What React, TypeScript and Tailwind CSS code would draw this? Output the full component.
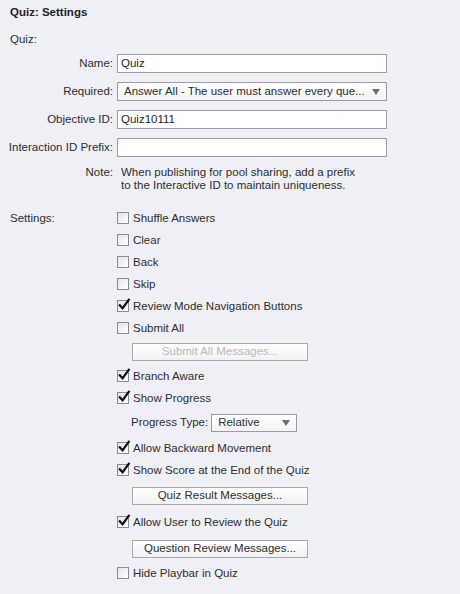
import React from "react";

const font = { fontFamily: '"Liberation Sans", Arial, sans-serif' };

function Check({ checked, label }: { checked?: boolean; label: string }) {
  return (
    <div className="flex h-[22px] items-center">
      <div className="relative h-[12px] w-[12px] border border-[#8c8c90] bg-gradient-to-br from-[#e4e4e8] to-[#ffffff]">
        {checked && (
          <svg viewBox="0 0 12 12" className="absolute left-[0px] top-[-2px] h-[12px] w-[12px] overflow-visible">
            <path d="M1.8 6.2 L4.6 9.2 L10.8 0.8" fill="none" stroke="#111" strokeWidth="2.2" strokeLinecap="square" strokeLinejoin="miter" />
          </svg>
        )}
      </div>
      <span className="ml-[4px] whitespace-nowrap text-[11.5px] leading-[14px] text-[#2e2e2e]">{label}</span>
    </div>
  );
}

function Btn({ label, disabled }: { label: string; disabled?: boolean }) {
  return (
    <div
      className={`ml-[15px] flex h-[18px] w-[176px] items-center justify-center border border-[#a8a8ae] bg-gradient-to-b from-[#ffffff] to-[#f1f1f3] text-[11.5px] ${
        disabled ? "text-[#b8b8bc]" : "text-[#2e2e2e]"
      }`}
    >
      {label}
    </div>
  );
}

function Row({ label, children }: { label: string; children: React.ReactNode }) {
  return (
    <div className="flex h-[19px] items-center">
      <div className="w-[114px] whitespace-nowrap pr-[1px] text-right text-[11.5px] text-[#2e2e2e]">{label}</div>
      <div className="ml-[3px]">{children}</div>
    </div>
  );
}

function Input({ value }: { value?: string }) {
  return (
    <div className="flex h-[19px] w-[270px] items-center border border-[#9c9ca4] bg-white pl-[3px] text-[11.5px] text-[#1e1e1e]">
      {value}
    </div>
  );
}

export default function App() {
  return (
    <div className="h-[594px] w-[460px] overflow-hidden bg-[#eff0f6] text-[#2e2e2e]" style={font}>
      <div className="pl-[10px] pt-[4px] text-[11.5px] font-bold leading-[16px] text-[#1e1e1e]">Quiz: Settings</div>
      <div className="mt-[11px] pl-[10px] text-[11.5px] leading-[16px]">Quiz:</div>
      <div className="mt-[7px] flex flex-col gap-[9px]">
        <Row label="Name:">
          <Input value="Quiz" />
        </Row>
        <Row label="Required:">
          <div className="flex h-[19px] w-[270px] items-center justify-between border border-[#9c9ca4] bg-gradient-to-b from-[#ffffff] to-[#f3f3f5] pl-[6px] pr-[6px] text-[11.5px] text-[#2e2e2e]">
            <span className="whitespace-nowrap">Answer All - The user must answer every que...</span>
            <svg viewBox="0 0 8 6" className="h-[6px] w-[8px] shrink-0">
              <path d="M0 0 H8 L4 6 Z" fill="#6e6e74" />
            </svg>
          </div>
        </Row>
        <Row label="Objective ID:">
          <Input value="Quiz10111" />
        </Row>
        <Row label="Interaction ID Prefix:">
          <Input />
        </Row>
      </div>
      <div className="mt-[9px] flex text-[11.5px] leading-[13px]">
        <div className="w-[114px] pr-[1px] text-right">Note:</div>
        <div className="ml-[7px]">
          When publishing for pool sharing, add a prefix
          <br />
          to the Interactive ID to maintain uniqueness.
        </div>
      </div>
      <div className="mt-[15px] flex">
        <div className="h-[22px] w-[117px] pl-[10px] text-[11.5px] leading-[22px]">Settings:</div>
        <div className="flex flex-col">
          <Check label="Shuffle Answers" />
          <Check label="Clear" />
          <Check label="Back" />
          <Check label="Skip" />
          <Check checked label="Review Mode Navigation Buttons" />
          <Check label="Submit All" />
          <div className="mt-[4px]">
            <Btn label="Submit All Messages..." disabled />
          </div>
          <div className="mt-[4px]">
            <Check checked label="Branch Aware" />
          </div>
          <Check checked label="Show Progress" />
          <div className="mt-[5px] flex h-[18px] items-center">
            <span className="ml-[14px] text-[11.5px]">Progress Type:</span>
            <div className="ml-[3px] flex h-[18px] w-[86px] items-center justify-between border border-[#9c9ca4] bg-gradient-to-b from-[#ffffff] to-[#f3f3f5] pl-[6px] pr-[6px] text-[11.5px]">
              <span>Relative</span>
              <svg viewBox="0 0 8 6" className="h-[6px] w-[8px]">
                <path d="M0 0 H8 L4 6 Z" fill="#6e6e74" />
              </svg>
            </div>
          </div>
          <div className="mt-[5px]">
            <Check checked label="Allow Backward Movement" />
          </div>
          <Check checked label="Show Score at the End of the Quiz" />
          <div className="mt-[6px]">
            <Btn label="Quiz Result Messages..." />
          </div>
          <div className="mt-[6px]">
            <Check checked label="Allow User to Review the Quiz" />
          </div>
          <div className="mt-[7px]">
            <Btn label="Question Review Messages..." />
          </div>
          <div className="mt-[4px]">
            <Check label="Hide Playbar in Quiz" />
          </div>
        </div>
      </div>
    </div>
  );
}
